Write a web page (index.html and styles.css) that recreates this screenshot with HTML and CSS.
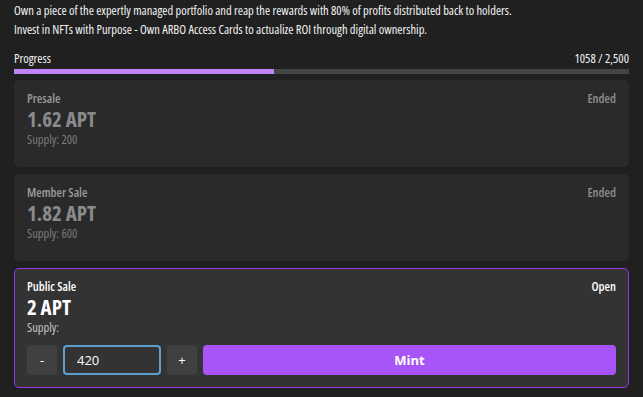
FILE: index.html
```html
<!DOCTYPE html>
<html>
  <head>
    <meta charset="UTF-8" />
    <link rel="stylesheet" href="styles.css">
  </head>
  <body>
    <div class="mint-panel">
      <div class="intro">
        <p>Own a piece of the expertly managed portfolio and reap the rewards with 80% of profits distributed back to holders.</p>
        <p>Invest in NFTs with Purpose - Own ARBO Access Cards to actualize ROI through digital ownership.</p>
      </div>

      <div class="progress">
        <div class="progress-head">
          <span>Progress</span>
          <span>1058 / 2,500</span>
        </div>
        <div class="progress-track">
          <div class="progress-fill" style="width: 42.32%"></div>
        </div>
      </div>

      <div class="sale-list">
        <div class="sale-card ended">
          <div class="sale-head">
            <span class="sale-name">Presale</span>
            <span class="sale-status">Ended</span>
          </div>
          <div class="sale-price">1.62 APT</div>
          <div class="sale-supply">Supply: 200</div>
        </div>

        <div class="sale-card ended">
          <div class="sale-head">
            <span class="sale-name">Member Sale</span>
            <span class="sale-status">Ended</span>
          </div>
          <div class="sale-price">1.82 APT</div>
          <div class="sale-supply">Supply: 600</div>
        </div>

        <div class="sale-card active">
          <div class="sale-head">
            <span class="sale-name">Public Sale</span>
            <span class="sale-status">Open</span>
          </div>
          <div class="sale-price">2 APT</div>
          <div class="sale-supply">Supply:</div>
          <div class="mint-controls">
            <button class="step-button">-</button>
            <input class="amount-input" type="text" value="420">
            <button class="step-button">+</button>
            <button class="mint-button">Mint</button>
          </div>
        </div>
      </div>
    </div>
  </body>
</html>
```

FILE: styles.css
```css
:root {
  --page-bg: #202020;
  --card-bg: #2a2a2a;
  --card-active-bg: #333333;
  --button-bg: #404040;
  --purple: #a855f7;
  --purple-border: #9333ea;
  --purple-light: #c084fc;
  --track: #454545;
  --muted: #8c8c8c;
  --white: #ffffff;
}

* {
  margin: 0;
  padding: 0;
  box-sizing: border-box;
}

body {
  font-family: 'Open Sans', 'Liberation Sans', sans-serif;
  font-stretch: condensed;
  background-color: var(--page-bg);
  color: var(--white);
  font-size: 12.5px;
}

.mint-panel {
  padding: 2px 14px 0;
}

.intro p {
  line-height: 18.5px;
  color: #f2f2f2;
}

.progress {
  margin-top: 13px;
}

.progress-head {
  display: flex;
  justify-content: space-between;
  line-height: 14px;
  color: #f2f2f2;
}

.progress-track {
  margin-top: 3px;
  height: 5px;
  background-color: var(--track);
}

.progress-fill {
  height: 100%;
  background-color: var(--purple-light);
}

.sale-list {
  margin-top: 6px;
  display: flex;
  flex-direction: column;
  gap: 7px;
}

.sale-card {
  background-color: var(--card-bg);
  border: 1px solid transparent;
  border-radius: 5px;
  padding: 10px 12px 12px;
}

.sale-card.ended {
  padding-bottom: 18px;
  color: var(--muted);
}

.sale-card.active {
  background-color: var(--card-active-bg);
  border-color: var(--purple-border);
}

.sale-head {
  display: flex;
  justify-content: space-between;
  line-height: 16px;
  font-weight: 600;
}

.sale-name {
  color: #9a9a9a;
}

.sale-status {
  color: #8e8e8e;
}

.active .sale-name,
.active .sale-status {
  color: var(--white);
}

.sale-price {
  font-size: 21px;
  font-weight: 700;
  line-height: 25px;
  color: #8a8a8a;
}

.active .sale-price {
  color: var(--white);
}

.sale-supply {
  line-height: 16px;
  color: #7a7a7a;
}

.active .sale-supply {
  color: #c4c4c4;
}

.mint-controls {
  margin-top: 9px;
  display: flex;
  gap: 6px;
  height: 30px;
}

.step-button {
  width: 30px;
  border: none;
  border-radius: 4px;
  background-color: var(--button-bg);
  color: var(--white);
  font-family: inherit;
  font-size: 13px;
  cursor: pointer;
}

.amount-input {
  width: 98px;
  border: 2px solid #5b9fd0;
  border-radius: 4px;
  background-color: var(--card-active-bg);
  color: var(--white);
  font-family: inherit;
  font-size: 13px;
  padding: 0 12px;
  outline: none;
}

.mint-button {
  flex: 1;
  border: none;
  border-radius: 4px;
  background-color: var(--purple);
  color: var(--white);
  font-family: inherit;
  font-size: 13px;
  font-weight: 700;
  cursor: pointer;
}
```
